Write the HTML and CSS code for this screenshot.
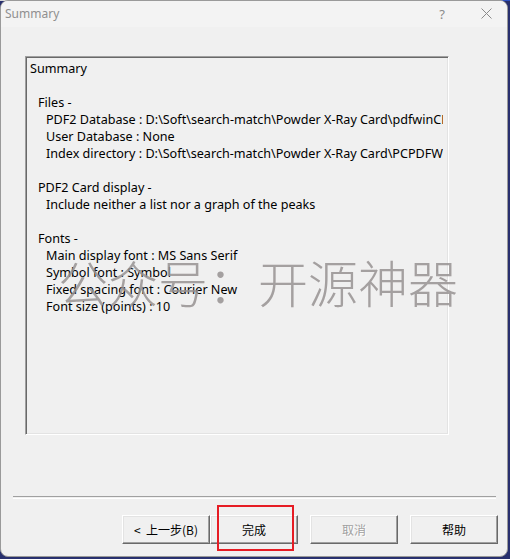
FILE: index.html
```html
<!DOCTYPE html>
<html lang="en">
<head>
<meta charset="utf-8">
<title>Summary</title>
<link rel="stylesheet" href="styles.css">
</head>
<body>
<div class="window">
  <div class="titlebar">
    <span class="title">Summary</span>
    <div class="caption-buttons">
      <span class="help-btn">?</span>
      <svg class="close-btn" width="11" height="11" viewBox="0 0 11 11"><path d="M0.5 0.5 L10.5 10.5 M10.5 0.5 L0.5 10.5" stroke="#8a8a8a" stroke-width="1" fill="none"/></svg>
    </div>
  </div>
  <div class="body">
    <div class="summary-box">
      <div class="lines">
        <div class="line">Summary</div>
        <div class="line">&nbsp;</div>
        <div class="line l1">Files -</div>
        <div class="line l2">PDF2 Database : D:\Soft\search-match\Powder X-Ray Card\pdfwinCD</div>
        <div class="line l2">User Database : None</div>
        <div class="line l2">Index directory : D:\Soft\search-match\Powder X-Ray Card\PCPDFWIN</div>
        <div class="line">&nbsp;</div>
        <div class="line l1">PDF2 Card display -</div>
        <div class="line l2">Include neither a list nor a graph of the peaks</div>
        <div class="line">&nbsp;</div>
        <div class="line l1">Fonts -</div>
        <div class="line l2">Main display font : MS Sans Serif</div>
        <div class="line l2">Symbol font : Symbol</div>
        <div class="line l2">Fixed spacing font : Courier New</div>
        <div class="line l2">Font size (points) : 10</div>
      </div>
    </div>
    <div class="separator"></div>
    <div class="button-row">
      <div class="nav-group">
        <button class="btn">&lt;&nbsp; 上一步(B)</button>
        <div class="highlight-wrap">
          <button class="btn">完成</button>
          <div class="red-box"></div>
        </div>
      </div>
      <button class="btn disabled">取消</button>
      <button class="btn">帮助</button>
    </div>
  </div>
  <div class="watermark">公众号：开源神器</div>
</div>
</body>
</html>
```

FILE: styles.css
```css
html {
  background:
    linear-gradient(to right, #d9d9d9 0, #d9d9d9 349px, #2f52c4 349px) top left / 100% 1px no-repeat,
    #28306e;
  height: 100%;
}

body {
  margin: 0;
  height: 100%;
}

.window {
  position: relative;
  box-sizing: border-box;
  width: 508px;
  height: 557px;
  border: 1px solid #9a9a9a;
  border-radius: 8px;
  background: #f0f0f0;
  overflow: hidden;
  display: flex;
  flex-direction: column;
  font-family: "Noto Sans", "Noto Sans CJK SC", sans-serif;
}

.titlebar {
  height: 26px;
  flex: none;
  background: #f3f3f3;
  display: flex;
  align-items: center;
  justify-content: space-between;
  padding-left: 4px;
}

.title {
  font-size: 12px;
  color: #8f8f8f;
  margin-top: -1px;
}

.caption-buttons {
  display: flex;
  align-items: center;
  gap: 36px;
  padding-right: 15px;
}

.help-btn {
  font-size: 13px;
  color: #8a8a8a;
  margin-top: -1px;
}

.close-btn {
  display: block;
  margin-top: -1px;
}

.body {
  flex: 1;
  display: flex;
  flex-direction: column;
  padding: 29px 0 0 0;
}

.summary-box {
  box-sizing: border-box;
  margin-left: 24px;
  width: 424px;
  height: 379px;
  border: 1px solid;
  border-color: #a0a0a0 #ffffff #ffffff #a0a0a0;
  box-shadow: inset 1px 1px 0 #696969, inset -1px -1px 0 #e3e3e3;
  padding: 2px 5px 0 4px;
  overflow: hidden;
}

.lines {
  padding-top: 1px;
  font-size: 12.6px;
  line-height: 17px;
  color: #000;
}

.line {
  white-space: nowrap;
  overflow: hidden;
}

.l1 { padding-left: 8px; }
.l2 { padding-left: 16px; }

.separator {
  margin: 61px 0 0 12px;
  width: 483px;
  height: 1px;
  border-top: 1px solid #a0a0a0;
  border-bottom: 1px solid #ffffff;
}

.button-row {
  margin-top: 16px;
  display: flex;
  justify-content: flex-end;
  gap: 12px;
  padding-right: 9px;
}

.nav-group {
  display: flex;
}

.highlight-wrap {
  position: relative;
}

.btn {
  box-sizing: border-box;
  width: 88px;
  height: 29px;
  margin: 0;
  padding: 0;
  background: #f0f0f0;
  border: 1px solid;
  border-color: #ffffff #696969 #696969 #ffffff;
  box-shadow: inset -1px -1px 0 #a0a0a0, inset 1px 1px 0 #e3e3e3;
  border-radius: 0;
  font-family: "Noto Sans CJK SC", "Noto Sans", sans-serif;
  font-size: 12px;
  color: #000;
  display: block;
}

.btn.disabled {
  color: #a0a0a0;
  text-shadow: 1px 1px 0 #ffffff;
}

.red-box {
  position: absolute;
  left: 7px;
  top: -10px;
  width: 77px;
  height: 46px;
  box-sizing: border-box;
  border: 2px solid #e61c24;
}

.watermark {
  position: absolute;
  left: 57px;
  top: 250px;
  font-family: "Noto Sans CJK SC", sans-serif;
  font-weight: 300;
  font-size: 50px;
  line-height: 60px;
  color: rgba(150, 146, 146, 0.85);
  white-space: nowrap;
}
```
